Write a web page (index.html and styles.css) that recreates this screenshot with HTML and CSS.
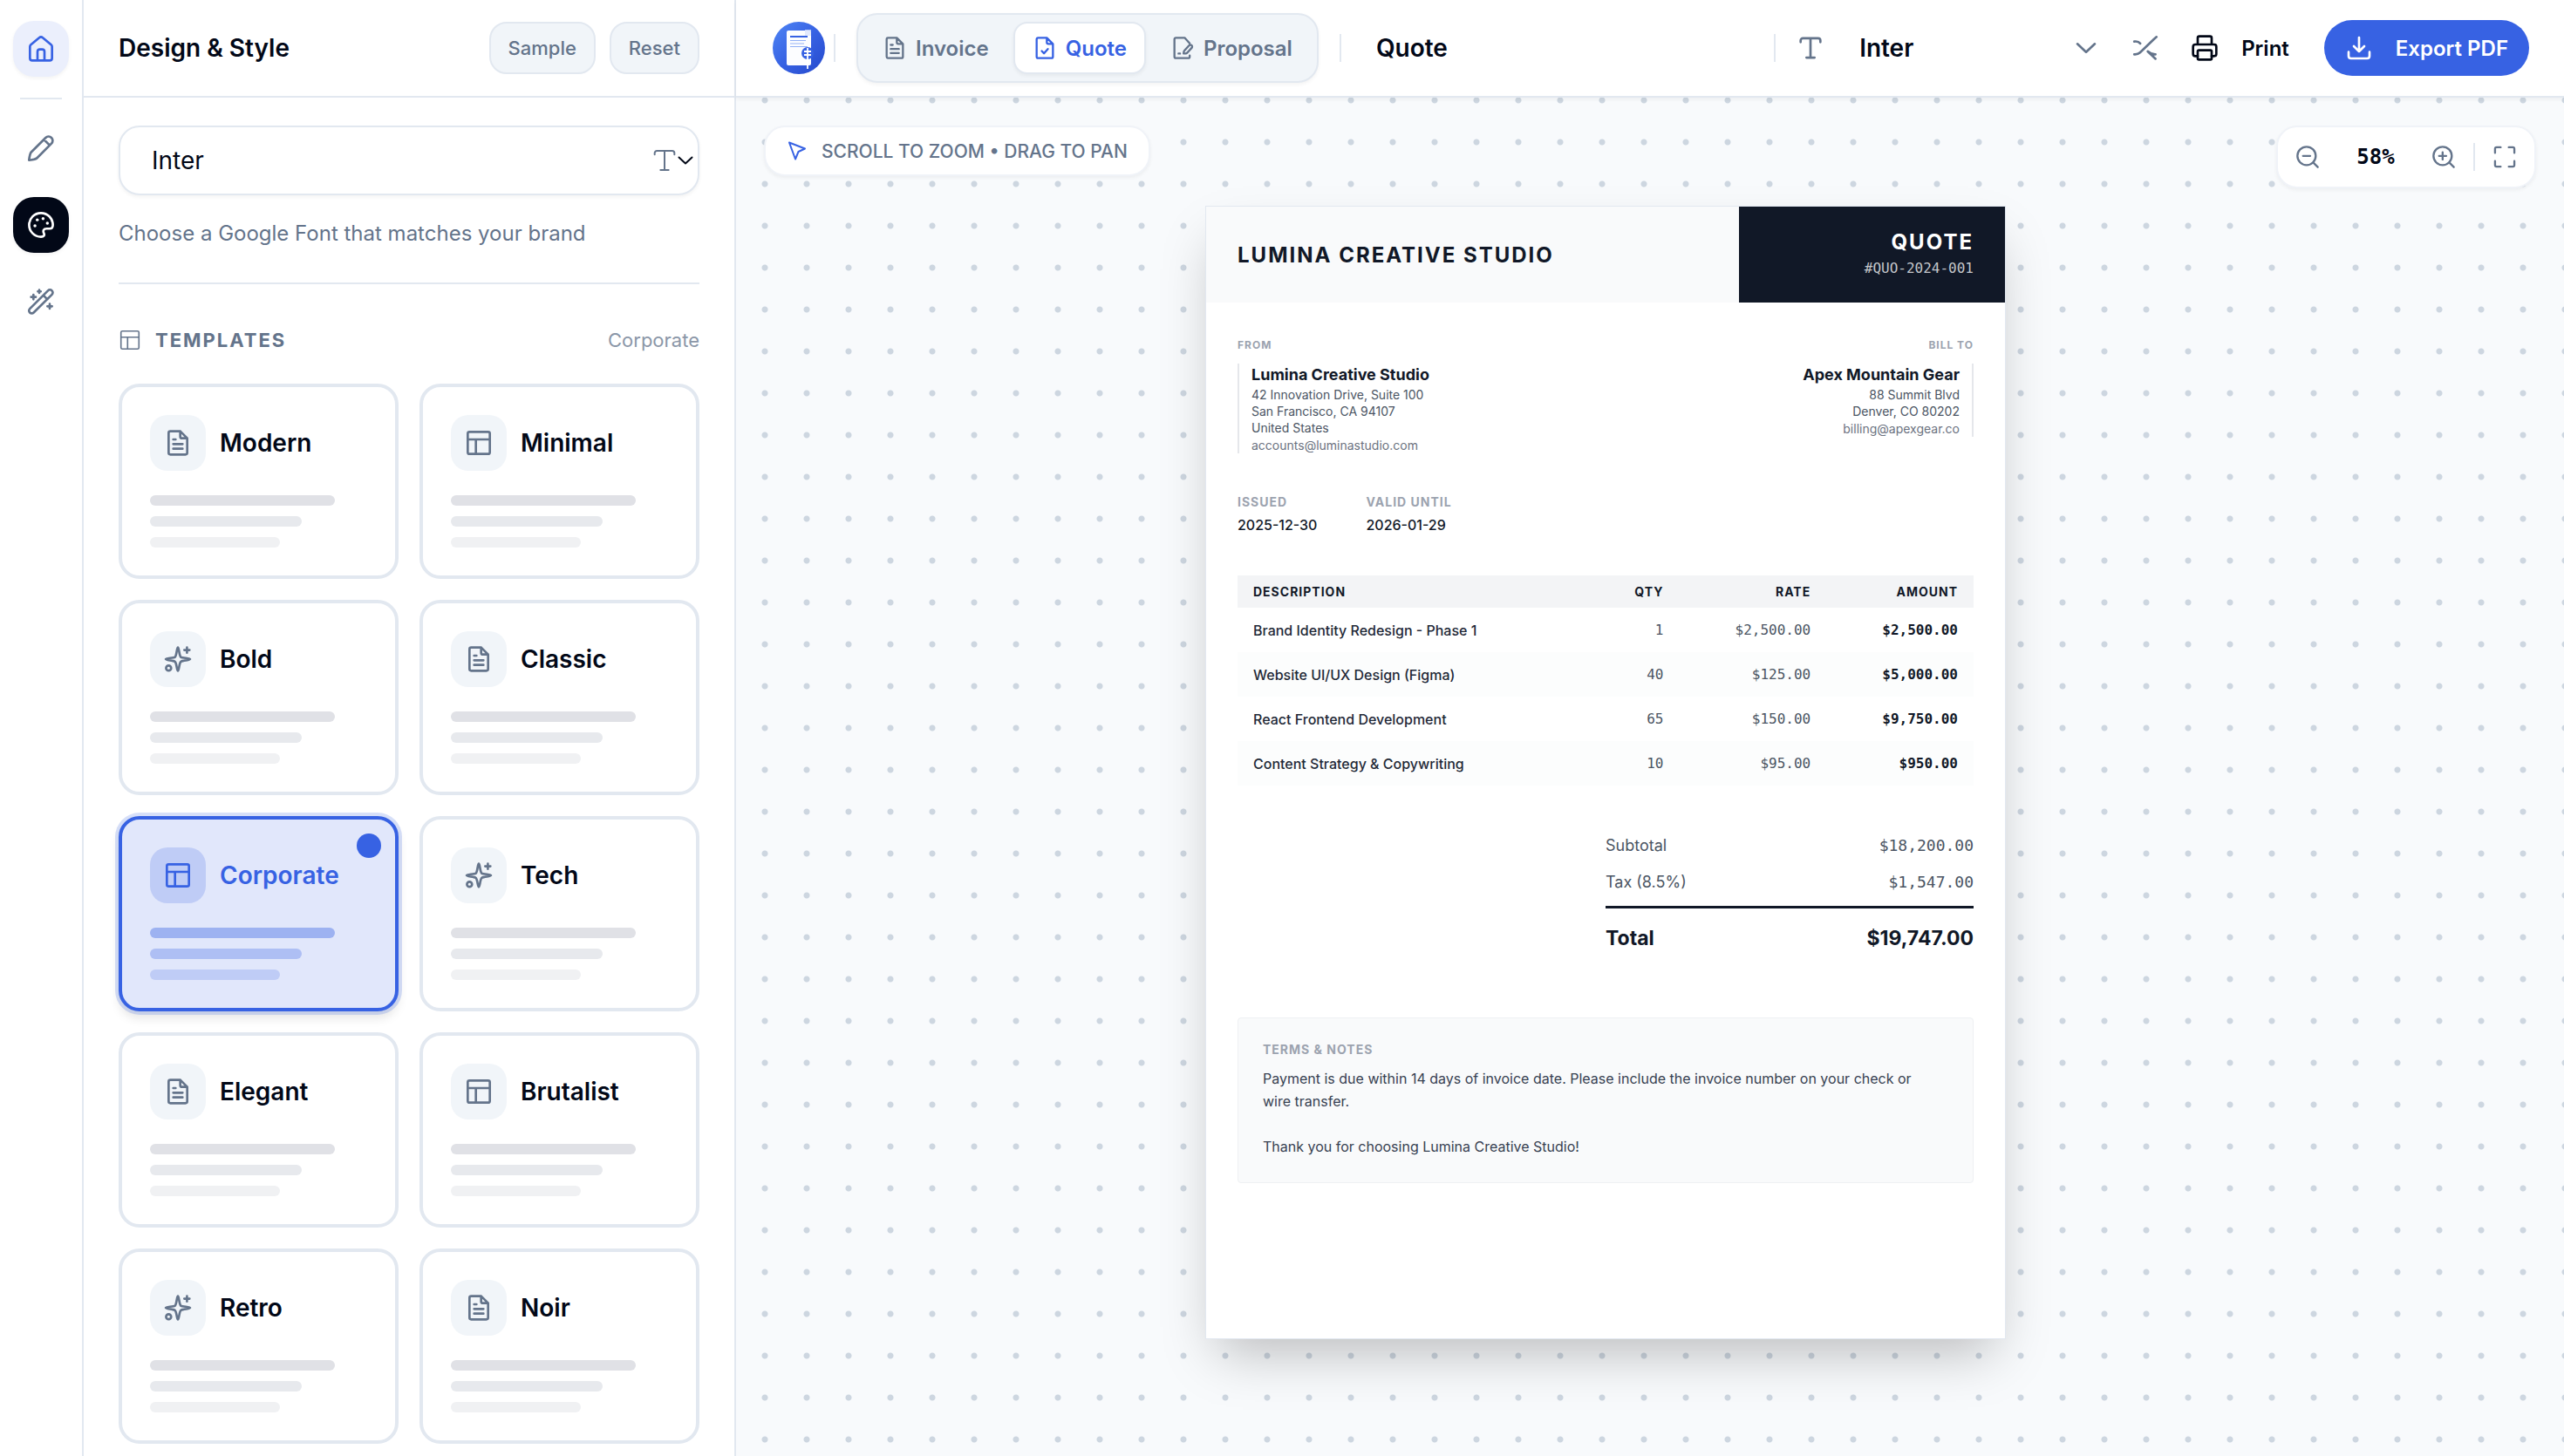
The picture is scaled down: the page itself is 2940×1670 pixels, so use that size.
FILE: index.html
```html
<!DOCTYPE html>
<html lang="en">
<head>
    <meta charset="UTF-8">
    <meta name="viewport" content="width=device-width, initial-scale=1.0">
    <title>Quote</title>
    <link rel="stylesheet" href="styles.css">
</head>
<body>
    <!-- Icon sprite -->
    <svg class="sprite" aria-hidden="true">
        <defs>
            <symbol id="i-home" viewBox="0 0 24 24"><path d="M2.500 10.200c0-.7.300-1.300.8-1.700l7.200-6a2.200 2.200 0 0 1 3 0l7.200 6c.5.4.8 1 .8 1.700V20a2 2 0 0 1-2 2h-15a2 2 0 0 1-2-2zM9 21.500V14.500a2 2 0 0 1 2-2h2a2 2 0 0 1 2 2v7"/></symbol>
            <symbol id="i-pencil" viewBox="0 0 24 24"><path d="M14.500 4.500 3.600 15.400c-.9.9-1.600 4.600-1.900 6.900 2.300-.3 6-1 6.900-1.900L19.500 9.500M14.500 4.500l1.500-1.500a3.400 3.400 0 0 1 5 5l-1.500 1.500M14.500 4.500l5 5"/></symbol>
            <symbol id="i-palette" viewBox="0 0 24 24"><path d="M12 1.800C6.200 1.800 1.800 6.400 1.800 12S6.400 22.200 12 22.200c2.500 0 3.300-1.400 2.500-3-1-2-.4-4 2.300-4h2.700c1.800 0 2.700-1.200 2.700-3.200C22.200 6.200 17.600 1.800 12 1.800z"/><g class="dots"><circle cx="6.800" cy="12.800" r="1.300"/><circle cx="8.800" cy="7.600" r="1.300"/><circle cx="13.800" cy="6.600" r="1.300"/><circle cx="17.500" cy="10.500" r="1.300"/></g></symbol>
            <symbol id="i-wand" viewBox="0 0 24 24"><path d="M18 2.500 2.400 18.100a2.200 2.200 0 0 0 3.300 3.300L21.400 5.900A2.200 2.200 0 0 0 18 2.500zM14 6.500l3.500 3.500M5.500 6v4M3.500 8h4M10.500 2v2.500M9.300 3.200h2.500M19.500 14v4M17.500 16h4"/></symbol>
            <symbol id="i-type" viewBox="0 0 24 24"><path d="M3.500 7V5.700a2 2 0 0 1 2-2h13a2 2 0 0 1 2 2V7M12 3.700v16.600M8.500 20.300h7"/></symbol>
            <symbol id="i-chevron" viewBox="0 0 24 24"><path d="m4.500 8.500 7.500 7 7.500-7"/></symbol>
            <symbol id="i-layout" viewBox="0 0 24 24"><rect x="2.500" y="2.500" width="19" height="19" rx="1.500"/><path d="M2.500 9h19M9.500 9v12.500"/></symbol>
            <symbol id="i-file" viewBox="0 0 24 24"><path d="M14 2H5.500A1.500 1.500 0 0 0 4 3.500v17A1.500 1.500 0 0 0 5.500 22h13a1.500 1.500 0 0 0 1.500-1.500V8zM14 2v4.500A1.500 1.500 0 0 0 15.500 8H20M8 9h2M8 13h8M8 17h8"/></symbol>
            <symbol id="i-file-check" viewBox="0 0 24 24"><path d="M14 2H5.500A1.500 1.500 0 0 0 4 3.500v17A1.500 1.500 0 0 0 5.500 22h13a1.500 1.500 0 0 0 1.500-1.500V8zM14 2v4.500A1.500 1.500 0 0 0 15.500 8H20M9 15l2.200 2.300L15 13"/></symbol>
            <symbol id="i-file-edit" viewBox="0 0 24 24"><path d="M19 7.500 14 2H5.500A1.500 1.500 0 0 0 4 3.500v17A1.500 1.500 0 0 0 5.500 22h12a1.500 1.500 0 0 0 1.500-1.500v-1M8 17.500h1.500M13 17.500c0-1.500.2-2.200.8-2.900l4.500-5a1.700 1.700 0 0 1 2.700 2.300l-4.600 5c-.9.600-2 .7-3.400.6z"/></symbol>
            <symbol id="i-sparkles" viewBox="0 0 24 24"><path d="M12 2c1 0 1 7 2.500 8.200C16 11.200 22.500 11 22.500 12s-6.500 1-8 2.200C13 15.500 13 22 12 22s-1-6.500-2.500-7.800C8 13 1.500 13 1.500 12s6.500-.8 8-1.800C11 9 11 2 12 2zM19.800 2v4.500M17.500 4.200H22"/><circle cx="4" cy="19.700" r="2.200"/></symbol>
            <symbol id="i-shuffle" viewBox="0 0 24 24"><path d="M2.400 6.500c2.300-.4 4 .2 5.200 1.700M2.400 17.500c2.300.2 3.600-.2 5-1.500L19.300 4.500l2.300-2M14 15l4 3.800 2.700 2.500M14.500 15.200c2 1.900 3.500 2.400 6.200 2.300"/></symbol>
            <symbol id="i-printer" viewBox="0 0 24 24"><path d="M6 9V3.500A1.500 1.500 0 0 1 7.500 2h9A1.500 1.500 0 0 1 18 3.500V9M6 19H4a2 2 0 0 1-2-2v-6a2 2 0 0 1 2-2h16a2 2 0 0 1 2 2v6a2 2 0 0 1-2 2h-2"/><rect x="6" y="14" width="12" height="8" rx="1"/></symbol>
            <symbol id="i-download" viewBox="0 0 24 24"><path d="M3 15.500V19a2 2 0 0 0 2 2h14a2 2 0 0 0 2-2v-3.500M12 3v12M7.500 10.500 12 15l4.500-4.500"/></symbol>
            <symbol id="i-cursor" viewBox="0 0 24 24"><path d="M3 2.500 21 9.500l-7.500 3.500L10 21.500z"/></symbol>
            <symbol id="i-zoom-out" viewBox="0 0 24 24"><circle cx="11" cy="11" r="9"/><path d="m17.500 17.500 4.500 4.500M7.500 11h7"/></symbol>
            <symbol id="i-zoom-in" viewBox="0 0 24 24"><circle cx="11" cy="11" r="9"/><path d="m17.500 17.500 4.500 4.500M7.500 11h7M11 7.500v7"/></symbol>
            <symbol id="i-fit" viewBox="0 0 24 24"><path d="M2.500 8V4A1.500 1.500 0 0 1 4 2.500h4M16 2.500h4A1.500 1.500 0 0 1 21.500 4v4M21.500 16v4a1.500 1.500 0 0 1-1.500 1.500h-4M8 21.500H4A1.500 1.500 0 0 1 2.500 20v-4"/></symbol>
        </defs>
    </svg>

    <div class="app">
        <nav class="rail" aria-label="Sections">
            <button type="button" class="rail-btn home" aria-label="Home"><svg class="icon"><use href="#i-home"/></svg></button>
            <span class="rail-line"></span>
            <button type="button" class="rail-btn" aria-label="Edit"><svg class="icon"><use href="#i-pencil"/></svg></button>
            <button type="button" class="rail-btn current" aria-label="Design"><svg class="icon"><use href="#i-palette"/></svg></button>
            <button type="button" class="rail-btn" aria-label="Assistant"><svg class="icon"><use href="#i-wand"/></svg></button>
        </nav>

        <aside class="sidebar">
            <header class="sidebar-header">
                <h2>Design &amp; Style</h2>
                <button type="button" class="small-btn">Sample</button>
                <button type="button" class="small-btn">Reset</button>
            </header>
            <div class="sidebar-body">
                <div class="font-field">
                    <select class="font-select" aria-label="Font"><option>Inter</option></select>
                    <span class="font-field-icons">
                        <svg class="icon muted"><use href="#i-type"/></svg>
                        <svg class="icon small-chevron"><use href="#i-chevron"/></svg>
                    </span>
                </div>
                <p class="field-hint">Choose a Google Font that matches your brand</p>

                <div class="section-title">
                    <svg class="icon icon-md"><use href="#i-layout"/></svg>
                    <h3>TEMPLATES</h3>
                    <span>Corporate</span>
                </div>

                <div class="templates">
                    <button type="button" class="template">
                        <span class="template-head"><span class="template-icon"><svg class="icon"><use href="#i-file"/></svg></span>Modern</span>
                        <span class="bar"></span><span class="bar"></span><span class="bar"></span>
                    </button>
                    <button type="button" class="template">
                        <span class="template-head"><span class="template-icon"><svg class="icon"><use href="#i-layout"/></svg></span>Minimal</span>
                        <span class="bar"></span><span class="bar"></span><span class="bar"></span>
                    </button>
                    <button type="button" class="template">
                        <span class="template-head"><span class="template-icon"><svg class="icon"><use href="#i-sparkles"/></svg></span>Bold</span>
                        <span class="bar"></span><span class="bar"></span><span class="bar"></span>
                    </button>
                    <button type="button" class="template">
                        <span class="template-head"><span class="template-icon"><svg class="icon"><use href="#i-file"/></svg></span>Classic</span>
                        <span class="bar"></span><span class="bar"></span><span class="bar"></span>
                    </button>
                    <button type="button" class="template selected" aria-pressed="true">
                        <span class="template-head"><span class="template-icon"><svg class="icon"><use href="#i-layout"/></svg></span>Corporate</span>
                        <span class="bar"></span><span class="bar"></span><span class="bar"></span>
                        <span class="template-dot"></span>
                    </button>
                    <button type="button" class="template">
                        <span class="template-head"><span class="template-icon"><svg class="icon"><use href="#i-sparkles"/></svg></span>Tech</span>
                        <span class="bar"></span><span class="bar"></span><span class="bar"></span>
                    </button>
                    <button type="button" class="template">
                        <span class="template-head"><span class="template-icon"><svg class="icon"><use href="#i-file"/></svg></span>Elegant</span>
                        <span class="bar"></span><span class="bar"></span><span class="bar"></span>
                    </button>
                    <button type="button" class="template">
                        <span class="template-head"><span class="template-icon"><svg class="icon"><use href="#i-layout"/></svg></span>Brutalist</span>
                        <span class="bar"></span><span class="bar"></span><span class="bar"></span>
                    </button>
                    <button type="button" class="template">
                        <span class="template-head"><span class="template-icon"><svg class="icon"><use href="#i-sparkles"/></svg></span>Retro</span>
                        <span class="bar"></span><span class="bar"></span><span class="bar"></span>
                    </button>
                    <button type="button" class="template">
                        <span class="template-head"><span class="template-icon"><svg class="icon"><use href="#i-file"/></svg></span>Noir</span>
                        <span class="bar"></span><span class="bar"></span><span class="bar"></span>
                    </button>
                </div>
            </div>
        </aside>

        <main class="workspace">
            <header class="topbar">
                <svg class="logo" viewBox="0 0 60 60" aria-hidden="true">
                    <defs>
                        <linearGradient id="logoFill" x1="0" y1="0" x2="1" y2="1">
                            <stop offset="0" stop-color="#4f86f5"/>
                            <stop offset="0.500" stop-color="#3762e3"/>
                            <stop offset="1" stop-color="#2549cc"/>
                        </linearGradient>
                    </defs>
                    <circle cx="30" cy="30" r="30" fill="url(#logoFill)"/>
                    <rect x="16" y="10" width="28" height="40" rx="2" fill="#fcfdff"/>
                    <rect x="37" y="9" width="7" height="7" fill="#dbe3fb" opacity="0.800"/>
                    <rect x="20" y="16" width="20" height="2" fill="#3762e3"/>
                    <path d="M20 21.500h18M20 25h16M20 28.500h20" stroke="#93b1f6" stroke-width="1.200"/>
                    <circle cx="40" cy="36" r="7" fill="#3762e3"/>
                    <path d="M40 30v24M36 34h8M36 38h8" stroke="#fff" stroke-width="1.800"/>
                </svg>
                <span class="divider"></span>
                <div class="tabs" role="tablist">
                    <button type="button" class="tab" role="tab"><svg class="icon icon-md"><use href="#i-file"/></svg>Invoice</button>
                    <button type="button" class="tab active" role="tab" aria-selected="true"><svg class="icon icon-md"><use href="#i-file-check"/></svg>Quote</button>
                    <button type="button" class="tab" role="tab"><svg class="icon icon-md"><use href="#i-file-edit"/></svg>Proposal</button>
                </div>
                <span class="divider title-divider"></span>
                <input class="doc-title" type="text" value="Quote" aria-label="Document title">
                <span class="divider"></span>
                <div class="top-font">
                    <svg class="icon muted"><use href="#i-type"/></svg>
                    <select class="top-select" aria-label="Document font"><option>Inter</option></select>
                    <svg class="icon muted"><use href="#i-chevron"/></svg>
                </div>
                <button type="button" class="plain-btn muted" aria-label="Shuffle"><svg class="icon"><use href="#i-shuffle"/></svg></button>
                <button type="button" class="plain-btn print-btn"><svg class="icon"><use href="#i-printer"/></svg>Print</button>
                <button type="button" class="export-btn"><svg class="icon"><use href="#i-download"/></svg>Export PDF</button>
            </header>

            <section class="canvas">
                <div class="pan-hint"><svg class="icon icon-sm"><use href="#i-cursor"/></svg>SCROLL TO ZOOM • DRAG TO PAN</div>
                <div class="zoom-bar">
                    <button type="button" aria-label="Zoom out"><svg class="icon icon-md"><use href="#i-zoom-out"/></svg></button>
                    <button type="button" class="zoom-value">58%</button>
                    <button type="button" aria-label="Zoom in"><svg class="icon icon-md"><use href="#i-zoom-in"/></svg></button>
                    <span class="divider"></span>
                    <button type="button" aria-label="Fit to screen"><svg class="icon icon-md"><use href="#i-fit"/></svg></button>
                </div>

                <article class="paper">
                    <header class="paper-header">
                        <h1>LUMINA CREATIVE STUDIO</h1>
                        <div class="doc-type">
                            <strong>QUOTE</strong>
                            <span>#QUO-2024-001</span>
                        </div>
                    </header>
                    <div class="paper-body">
                        <div class="parties">
                            <div>
                                <h4>FROM</h4>
                                <div class="party">
                                    <strong>Lumina Creative Studio</strong>
                                    <span>42 Innovation Drive, Suite 100</span>
                                    <span>San Francisco, CA 94107</span>
                                    <span>United States</span>
                                    <span class="email">accounts@luminastudio.com</span>
                                </div>
                            </div>
                            <div class="bill-to">
                                <h4>BILL TO</h4>
                                <div class="party">
                                    <strong>Apex Mountain Gear</strong>
                                    <span>88 Summit Blvd</span>
                                    <span>Denver, CO 80202</span>
                                    <span class="email">billing@apexgear.co</span>
                                </div>
                            </div>
                        </div>

                        <dl class="dates">
                            <div><dt>ISSUED</dt><dd>2025-12-30</dd></div>
                            <div><dt>VALID UNTIL</dt><dd>2026-01-29</dd></div>
                        </dl>

                        <table class="items">
                            <thead>
                                <tr><th>DESCRIPTION</th><th class="qty">QTY</th><th class="money">RATE</th><th class="money">AMOUNT</th></tr>
                            </thead>
                            <tbody>
                                <tr><td>Brand Identity Redesign - Phase 1</td><td>1</td><td>$2,500.00</td><td>$2,500.00</td></tr>
                                <tr><td>Website UI/UX Design (Figma)</td><td>40</td><td>$125.00</td><td>$5,000.00</td></tr>
                                <tr><td>React Frontend Development</td><td>65</td><td>$150.00</td><td>$9,750.00</td></tr>
                                <tr><td>Content Strategy &amp; Copywriting</td><td>10</td><td>$95.00</td><td>$950.00</td></tr>
                            </tbody>
                        </table>

                        <div class="totals">
                            <div class="total-row"><span>Subtotal</span><span class="mono">$18,200.00</span></div>
                            <div class="total-row"><span>Tax (8.5%)</span><span class="mono">$1,547.00</span></div>
                            <div class="grand-total"><span>Total</span><span>$19,747.00</span></div>
                        </div>

                        <div class="terms">
                            <h4>TERMS &amp; NOTES</h4>
                            <p>Payment is due within 14 days of invoice date. Please include the invoice number on your check or wire transfer.</p>
                            <p>Thank you for choosing Lumina Creative Studio!</p>
                        </div>
                    </div>
                </article>
            </section>
        </main>
    </div>
</body>
</html>
```

FILE: styles.css
```css
:root {
    --primary: #3762e3;
    --ink: #020817;
    --muted: #64748b;
    --line: #e2e8f0;
    --soft: #f1f5f9;
    --mono: "DejaVu Sans Mono", monospace;
}

* {
    box-sizing: border-box;
}

body {
    margin: 0;
    font-family: Inter, sans-serif;
    font-size: 24px;
    color: var(--ink);
    background: #fff;
}

h1, h2, h3, h4, p, dl, dd {
    margin: 0;
}

button, input, select {
    font: inherit;
    color: inherit;
    background: none;
    border: 0;
    padding: 0;
    appearance: none;
}

button {
    cursor: pointer;
}

.sprite {
    position: absolute;
    width: 0;
    height: 0;
}

.icon {
    width: 32px;
    height: 32px;
    flex: none;
    fill: none;
    stroke: currentColor;
    stroke-width: 1.5;
    stroke-linecap: round;
    stroke-linejoin: round;
}

.icon-md {
    width: 28px;
    height: 28px;
}

.icon-sm {
    width: 24px;
    height: 24px;
}

.dots {
    fill: currentColor;
    stroke: none;
}

.muted {
    color: var(--muted);
}

.divider {
    flex: none;
    width: 2px;
    height: 32px;
    background: var(--line);
}

.app {
    display: flex;
    height: 100vh;
    overflow: hidden;
}

/* Left icon rail */
.rail {
    flex: none;
    width: 96px;
    padding: 24px 0;
    border-right: 2px solid var(--line);
    display: flex;
    flex-direction: column;
    align-items: center;
    gap: 24px;
}

.rail-btn {
    width: 64px;
    height: 64px;
    border-radius: 24px;
    display: flex;
    align-items: center;
    justify-content: center;
    color: var(--muted);
}

.rail-btn .icon {
    stroke-width: 2;
}

.rail-btn.home {
    color: var(--primary);
    background: #ebeffc;
    box-shadow: 0 2px 4px rgba(0, 0, 0, 0.05);
}

.rail-btn.current {
    color: #fff;
    background: var(--ink);
    box-shadow: 0 2px 4px rgba(0, 0, 0, 0.05);
}

.rail-line {
    width: 48px;
    height: 2px;
    background: var(--line);
}

/* Design panel */
.sidebar {
    flex: none;
    width: 748px;
    border-right: 2px solid var(--line);
    display: flex;
    flex-direction: column;
}

.sidebar-header {
    flex: none;
    height: 112px;
    padding: 0 40px;
    border-bottom: 2px solid var(--line);
    display: flex;
    align-items: center;
    gap: 16px;
}

.sidebar-header h2 {
    flex: 1;
    font-size: 28px;
    font-weight: 600;
}

.small-btn {
    height: 60px;
    padding: 0 20px;
    border: 2px solid var(--line);
    border-radius: 20px;
    background: var(--soft);
    color: var(--muted);
    font-size: 22px;
    font-weight: 500;
}

.sidebar-body {
    padding: 32px 40px;
}

.font-field {
    position: relative;
}

.font-select {
    display: block;
    width: 100%;
    height: 80px;
    padding: 0 36px;
    border: 2px solid var(--line);
    border-radius: 24px;
    background: #fff;
    box-shadow: 0 2px 4px rgba(0, 0, 0, 0.05);
    font-size: 28px;
}

/* icons drawn over the select */
.font-field-icons {
    position: absolute;
    right: 4px;
    top: 24px;
    display: flex;
    align-items: center;
    pointer-events: none;
}

.small-chevron {
    width: 24px;
    height: 24px;
    margin-left: -4px;
    stroke-width: 2;
}

.field-hint {
    padding: 26px 0 38px;
    border-bottom: 2px solid var(--line);
    color: var(--muted);
    font-size: 24px;
    line-height: 36px;
}

.section-title {
    display: flex;
    align-items: center;
    gap: 16px;
    padding: 48px 0 34px;
    color: var(--muted);
    font-size: 22px;
    line-height: 32px;
}

.section-title .icon {
    width: 26px;
}

.section-title h3 {
    flex: 1;
    font-size: 22px;
    font-weight: 700;
    letter-spacing: 2px;
}

.section-title span {
    color: #8b97a8;
}

.templates {
    display: grid;
    grid-template-columns: 1fr 1fr;
    gap: 24px;
}

.template {
    position: relative;
    height: 224px;
    padding: 32px;
    border: 4px solid var(--line);
    border-radius: 24px;
    display: flex;
    flex-direction: column;
    gap: 12px;
}

.template-head {
    display: flex;
    align-items: center;
    gap: 16px;
    margin-bottom: 16px;
    font-size: 28px;
    font-weight: 600;
}

.template-icon {
    width: 64px;
    height: 64px;
    border-radius: 20px;
    background: var(--soft);
    color: var(--muted);
    display: flex;
    align-items: center;
    justify-content: center;
}

.template-icon .icon {
    stroke-width: 2;
}

.bar {
    width: 85%;
    height: 12px;
    border-radius: 6px;
    background: #e0e1e6;
}

.bar:nth-child(3) {
    width: 70%;
    background: #e7e9ed;
}

.bar:nth-child(4) {
    width: 60%;
    background: #f0f1f3;
}

.template.selected {
    border-color: var(--primary);
    background: #e1e7fb;
    color: var(--primary);
    box-shadow: 0 0 0 4px rgba(55, 98, 227, 0.2), 0 8px 12px rgba(0, 0, 0, 0.1);
}

.selected .template-icon {
    background: #bfccf6;
    color: var(--primary);
}

.selected .bar {
    background: #9db2f1;
}

.selected .bar:nth-child(3) {
    background: #aebff4;
}

.selected .bar:nth-child(4) {
    background: #bfccf6;
}

.template-dot {
    position: absolute;
    top: 16px;
    right: 16px;
    width: 28px;
    height: 28px;
    border-radius: 50%;
    background: var(--primary);
}

/* Top bar */
.workspace {
    flex: 1;
    min-width: 0;
    display: flex;
    flex-direction: column;
}

.topbar {
    position: relative;
    z-index: 1;
    flex: none;
    height: 112px;
    padding: 0 40px 0 42px;
    border-bottom: 2px solid var(--line);
    background: #fff;
    box-shadow: 0 2px 4px rgba(0, 0, 0, 0.05);
    display: flex;
    align-items: center;
}

.logo {
    width: 60px;
    height: 60px;
    margin-right: 10px;
}

.tabs {
    display: flex;
    gap: 8px;
    margin: 0 24px;
    padding: 8px;
    border: 2px solid var(--line);
    border-radius: 24px;
    background: var(--soft);
    box-shadow: 0 2px 4px rgba(0, 0, 0, 0.05);
}

.tab {
    height: 60px;
    padding: 0 20px;
    border-radius: 16px;
    display: flex;
    align-items: center;
    gap: 10px;
    color: var(--muted);
    font-weight: 600;
}

.tab .icon {
    stroke-width: 2;
}

.tab.active {
    border: 2px solid var(--line);
    background: #fff;
    color: var(--primary);
    box-shadow: 0 2px 4px rgba(0, 0, 0, 0.05);
}

.doc-title {
    flex: 1;
    min-width: 0;
    padding: 0 40px;
    font-size: 28px;
    font-weight: 600;
}

.top-font {
    display: flex;
    align-items: center;
    padding: 0 36px 0 24px;
}

.top-select {
    width: 284px;
    padding-left: 40px;
    font-size: 28px;
    font-weight: 600;
}

.plain-btn {
    display: flex;
    align-items: center;
    gap: 26px;
    margin-right: 36px;
    font-weight: 600;
}

.print-btn {
    margin-right: 40px;
}

.export-btn {
    height: 64px;
    padding: 0 24px;
    border-radius: 32px;
    background: var(--primary);
    color: #fff;
    display: flex;
    align-items: center;
    gap: 26px;
    font-weight: 600;
}

.topbar > button .icon,
.top-font .icon {
    stroke-width: 2;
}

/* Canvas */
.canvas {
    position: relative;
    flex: 1;
    min-height: 0;
    padding: 124px 102px 0 0;
    background-color: #f8fafc;
    background-image: radial-gradient(circle, #cdd6e0 3px, transparent 4px);
    background-size: 48px 48px;
    background-position: 9px -21px;
    display: flex;
    justify-content: center;
    align-items: flex-start;
}

.pan-hint,
.zoom-bar {
    position: absolute;
    top: 32px;
    display: flex;
    align-items: center;
    border: 2px solid #f0f3f8;
    background: #fff;
    box-shadow: 0 2px 4px rgba(0, 0, 0, 0.05);
    color: var(--muted);
}

.pan-hint {
    left: 32px;
    height: 58px;
    padding: 0 24px;
    gap: 16px;
    border-radius: 24px;
    font-size: 21px;
    font-weight: 500;
}

.pan-hint .icon {
    color: var(--primary);
    stroke-width: 2;
}

.zoom-bar {
    right: 32px;
    height: 72px;
    padding: 0 20px;
    gap: 20px;
    border-radius: 24px;
}

.zoom-bar button {
    display: flex;
}

.zoom-bar .icon {
    stroke-width: 2;
}

.zoom-bar .zoom-value {
    width: 88px;
    justify-content: center;
    color: var(--ink);
    font-family: var(--mono);
    font-size: 24px;
    font-weight: 600;
}

/* Document preview */
.paper {
    flex: none;
    width: 918px;
    height: 1300px;
    border: 1px solid var(--line);
    background: #fff;
    color: #111827;
    box-shadow: 0 29px 58px -14px rgba(0, 0, 0, 0.25);
    font-size: 16px;
}

.paper-header {
    display: grid;
    grid-template-columns: minmax(0, 2fr) minmax(0, 1fr);
    height: 110px;
    background: #f9fafb;
}

.paper-header h1 {
    align-self: center;
    padding-left: 36px;
    font-size: 24px;
    font-weight: 700;
    letter-spacing: 2px;
}

.doc-type {
    padding-right: 36px;
    background: #111827;
    color: #fff;
    display: flex;
    flex-direction: column;
    align-items: flex-end;
    justify-content: center;
}

.doc-type strong {
    font-size: 24px;
    line-height: 32px;
    letter-spacing: 2px;
}

.doc-type span {
    color: #c4c6ca;
    font-family: var(--mono);
    line-height: 28px;
}

.paper-body {
    padding: 39px 36px;
}

.paper h4,
.dates dt {
    color: #9ca3af;
    font-size: 14px;
    line-height: 20px;
    font-weight: 700;
    letter-spacing: 1px;
}

.parties {
    display: flex;
    justify-content: space-between;
}

.parties h4 {
    margin-bottom: 11px;
    font-size: 12px;
}

.party {
    padding: 0 14px;
    border-left: 2px solid #e5e7eb;
    display: flex;
    flex-direction: column;
    color: #4b5563;
    font-size: 14px;
    line-height: 19px;
}

.party strong {
    color: #111827;
    font-size: 18px;
    line-height: 26px;
}

.party .email {
    margin-top: 1px;
    color: #6b7280;
}

.bill-to {
    text-align: right;
}

.bill-to .party {
    border-left: 0;
    border-right: 2px solid #e5e7eb;
}

.dates {
    display: flex;
    gap: 56px;
    padding: 46px 0;
}

.dates dd {
    margin-top: 4px;
    font-weight: 500;
    line-height: 24px;
}

.items {
    width: 100%;
    border-collapse: collapse;
}

.items th,
.items td {
    padding: 0 18px;
    text-align: right;
}

.items th {
    height: 37px;
    background: #f3f4f6;
    font-size: 14px;
    letter-spacing: 1px;
}

.items .qty {
    width: 16%;
}

.items .money {
    width: 20%;
}

.items td {
    height: 51px;
    color: #4b5563;
    font-family: var(--mono);
}

.items tr:nth-child(even) td {
    background: #fcfdfd;
}

.items th:first-child,
.items td:first-child {
    text-align: left;
}

.items td:first-child {
    color: #1f2937;
    font-family: inherit;
    font-weight: 500;
}

.items td:last-child {
    color: #111827;
    font-weight: 700;
}

.totals {
    width: 50%;
    margin: 48px 0 0 auto;
    color: #4b5563;
    font-size: 18px;
}

.total-row,
.grand-total {
    display: flex;
    justify-content: space-between;
    line-height: 42px;
}

.mono {
    font-family: var(--mono);
}

.grand-total {
    margin-top: 6px;
    padding-top: 13px;
    border-top: 3px solid #111827;
    color: #111827;
    font-size: 23px;
    font-weight: 700;
}

.terms {
    margin-top: 70px;
    padding: 26px 40px 28px 28px;
    border: 1px solid #eef0f3;
    border-radius: 4px;
    background: #f9fafb;
    color: #374151;
    line-height: 26px;
}

.terms h4 {
    margin-bottom: 10px;
}

.terms p + p {
    margin-top: 26px;
}
```
